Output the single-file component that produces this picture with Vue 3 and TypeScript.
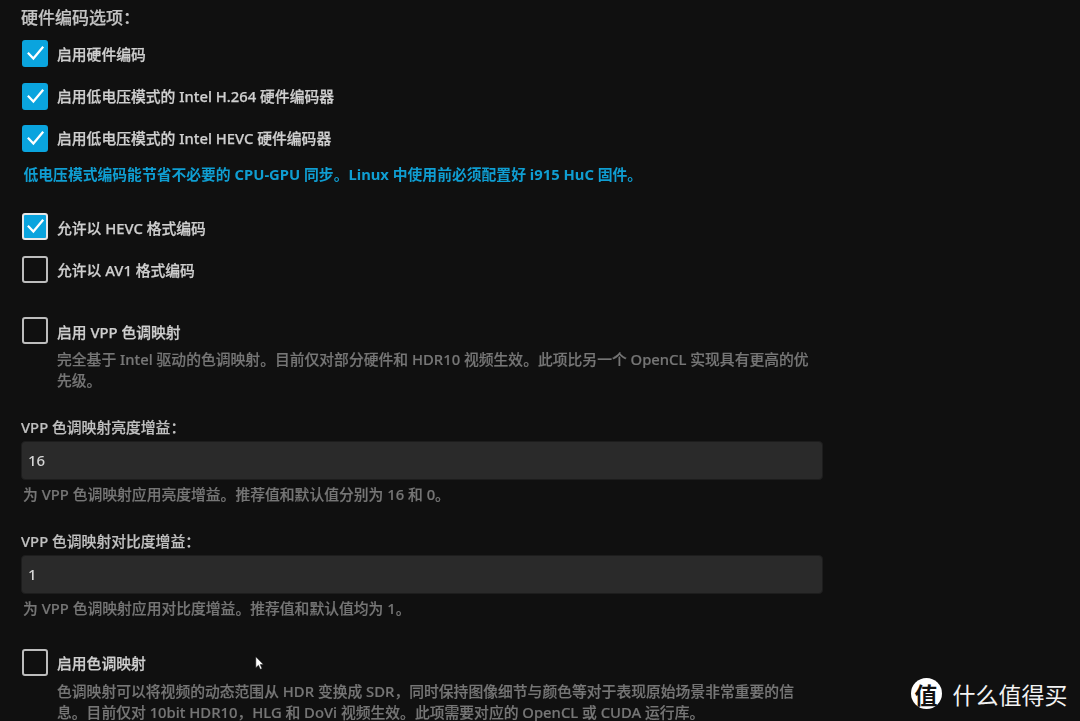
<script setup lang="ts">
interface Row { label: string; checked: boolean; cls?: string }
const group1: Row[] = [
  { label: '启用硬件编码', checked: true },
  { label: '启用低电压模式的 Intel H.264 硬件编码器', checked: true },
  { label: '启用低电压模式的 Intel HEVC 硬件编码器', checked: true }
]
const group2: Row[] = [
  { label: '允许以 HEVC 格式编码', checked: true, cls: 'focus' },
  { label: '允许以 AV1 格式编码', checked: false }
]
</script>

<template>
  <main class="page">
    <div class="content">
      <h2 class="title">硬件编码选项：</h2>

      <section class="checks first-group">
        <label v-for="r in group1" :key="r.label" class="row">
          <span class="box" :class="{ on: r.checked }">
            <svg v-if="r.checked" viewBox="0 0 27 27" class="tick"><path d="M6 12.8l5.6 5.8 10-12" /></svg>
          </span>
          <span class="label">{{ r.label }}</span>
        </label>
      </section>

      <p class="note">低电压模式编码能节省不必要的 CPU-GPU 同步。Linux 中使用前必须配置好 i915 HuC 固件。</p>

      <section class="checks second">
        <label v-for="r in group2" :key="r.label" class="row">
          <span class="box" :class="[{ on: r.checked }, r.cls]">
            <svg v-if="r.checked" viewBox="0 0 27 27" class="tick"><path d="M6 12.8l5.6 5.8 10-12" /></svg>
          </span>
          <span class="label">{{ r.label }}</span>
        </label>
      </section>

      <section class="block vpp">
        <label class="row">
          <span class="box"></span>
          <span class="label">启用 VPP 色调映射</span>
        </label>
        <p class="desc indent">完全基于 Intel 驱动的色调映射。目前仅对部分硬件和 HDR10 视频生效。此项比另一个 OpenCL 实现具有更高的优先级。</p>
      </section>

      <section class="field">
        <div class="flabel">VPP 色调映射亮度增益：</div>
        <div class="input">16</div>
        <p class="desc">为 VPP 色调映射应用亮度增益。推荐值和默认值分别为 16 和 0。</p>
      </section>

      <section class="field">
        <div class="flabel">VPP 色调映射对比度增益：</div>
        <div class="input">1</div>
        <p class="desc">为 VPP 色调映射应用对比度增益。推荐值和默认值均为 1。</p>
      </section>

      <section class="block tone">
        <label class="row">
          <span class="box"></span>
          <span class="label">启用色调映射</span>
        </label>
        <p class="desc indent">色调映射可以将视频的动态范围从 HDR 变换成 SDR，同时保持图像细节与颜色等对于表现原始场景非常重要的信息。目前仅对 10bit HDR10，HLG 和 DoVi 视频生效。此项需要对应的 OpenCL 或 CUDA 运行库。</p>
      </section>
    </div>

    <svg class="cursor" viewBox="0 0 12 18"><path d="M1 1v13l3.2-3 2.2 5 2-.9-2.2-4.9H10z" /></svg>

    <div class="mark">
      <span class="badge">值</span>
      <span class="brand">什么值得买</span>
    </div>
  </main>
</template>

<style>
html, body { margin: 0; background: #101010; }
</style>

<style scoped>
.page {
  position: relative;
  width: 1080px;
  height: 721px;
  overflow: hidden;
  background: #101010;
  color: #d6d6d6;
  font-family: "Noto Sans", "Noto Sans CJK SC", sans-serif;
  font-size: 14.8px;
  line-height: 20px;
}
.content {
  box-sizing: border-box;
  height: 721px;
  padding: 8px 0 0 21px;
  filter: blur(0.5px);
}
.title {
  margin: 0;
  font-size: 17px;
  font-weight: 500;
  line-height: 20px;
  color: #c4c4c4;
  -webkit-text-stroke: 0.2px #c4c4c4;
}
.checks { display: flex; flex-direction: column; gap: 15.3px; }
.first-group { margin-top: 12.4px; }
.first-group .label { top: 0; }
.row { display: flex; align-items: center; gap: 8.8px; height: 27px; }
.box {
  box-sizing: border-box;
  width: 26.5px;
  height: 27px;
  margin-left: 0.7px;
  flex: none;
  border: 2px solid #bdbdbd;
  border-radius: 3px;
  display: flex;
  align-items: center;
  justify-content: center;
}
.box.on { background: #0aa4de; border-color: #0aa4de; }
.box.focus { border-color: #e8e8e8; }
.tick { width: 26.5px; height: 27px; flex: none; margin: -2px; }
.tick path { fill: none; stroke: #fff; stroke-width: 2.3; }
.label {
  font-weight: 500;
  color: #cfcfcf;
  position: relative;
  top: 1px;
  -webkit-text-stroke: 0.25px #cfcfcf;
}
.note {
  margin: 12.2px 0 0 2.5px;
  font-weight: 700;
  color: #0f9ed2;
}
.second { margin-top: 29.3px; }
.vpp { margin-top: 34.6px; }
.tone { margin-top: 29.5px; }
.desc {
  margin: 4.5px 0 0 2px;
  line-height: 21px;
  font-weight: 500;
  color: #767676;
  -webkit-text-stroke: 0.2px #767676;
}
.indent { margin: 5px 0 0 36px; width: 753px; }
.field { width: 802px; margin-top: 25.5px; }
.flabel {
  color: #c0c0c0;
  font-weight: 500;
  line-height: 20px;
  margin-bottom: 3.7px;
  -webkit-text-stroke: 0.2px #c0c0c0;
}
.input {
  box-sizing: border-box;
  height: 39.3px;
  padding: 0 6px;
  display: flex;
  align-items: center;
  font-size: 15px;
  font-weight: 500;
  background: #2a2a2a;
  border: 1px solid #1d1d1d;
  border-radius: 4px;
  color: #d6d6d6;
}
.cursor { position: absolute; left: 255px; top: 656px; width: 10px; height: 15px; }
.cursor path { fill: #fff; stroke: #222; stroke-width: .6; }
.mark {
  position: absolute;
  left: 910.5px;
  top: 678px;
  display: flex;
  align-items: center;
  gap: 11px;
}
.badge {
  width: 31px;
  height: 31px;
  border-radius: 50%;
  background: #fff;
  color: #111;
  display: flex;
  align-items: center;
  justify-content: center;
  font-size: 23px;
  font-weight: 700;
  font-family: "Noto Sans CJK SC", sans-serif;
}
.brand {
  font-size: 23px;
  color: #f2f2f2;
  font-family: "Noto Sans CJK SC", sans-serif;
  line-height: 30px;
}
</style>
